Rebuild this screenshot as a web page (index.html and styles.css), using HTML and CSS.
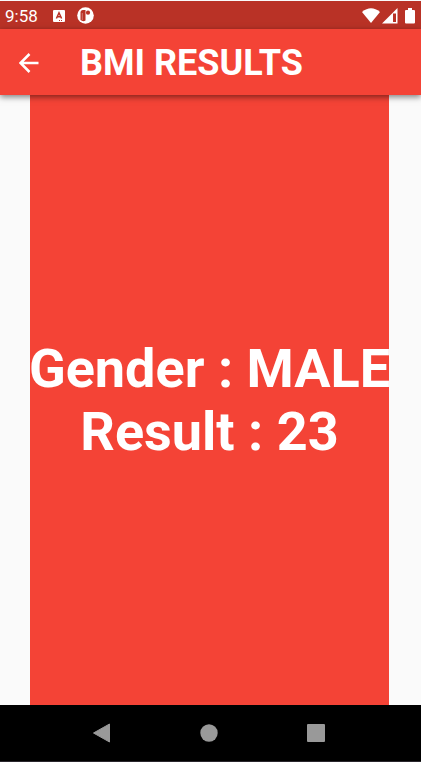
FILE: index.html
```html
<!DOCTYPE html>
<html lang="en">
<head>
<meta charset="utf-8">
<meta name="viewport" content="width=device-width, initial-scale=1">
<title>BMI Results</title>
<link rel="stylesheet" href="styles.css">
</head>
<body>
<div class="status-bar">
  <time class="clock">9:58</time>
  <div class="notices">
    <svg width="12" height="12" viewBox="0 0 12 12" aria-hidden="true">
      <rect width="12" height="12" rx="1" fill="#fff"/>
      <path d="M3.400 8.500 6 2.800l2.600 5.700M4.300 6.800h3.400" fill="none" stroke="#b93226" stroke-width="1.500"/>
      <path d="M6 10.500h1M8 10.500h1" stroke="#b93226"/>
    </svg>
    <svg width="17" height="17" viewBox="0 0 17 17" aria-hidden="true">
      <circle cx="8.500" cy="8.500" r="8.300" fill="#fff"/>
      <path d="M3.500 13V5.500q0-2.500 2.500-2.500h2.500v10.500q-2.500 1.500-5-.5Z" fill="#b93226"/>
      <path d="M5.300 6v7" stroke="#fff" stroke-opacity=".35"/>
      <circle cx="11" cy="5.700" r="2.100" fill="#b93226"/>
    </svg>
  </div>
  <div class="signals">
    <svg width="18" height="16" viewBox="0 0 18 16" aria-hidden="true"><path d="M0 4Q9-3.500 18 4L9 15Z" fill="#fff"/></svg>
    <svg width="16" height="16" viewBox="0 0 16 16" aria-hidden="true"><path d="M0 15.500 15.500 0v15.500Z" fill="#fff"/><path d="M11 5.500h3v8.500h-3Z" fill="#b93226"/></svg>
    <svg class="battery" width="10" height="16" viewBox="0 0 10 16" aria-hidden="true"><path d="M3 0h4v2h2q1 0 1 1v11.500q0 1-1 1H1q-1 0-1-1V3q0-1 1-1h2Z" fill="#fff"/></svg>
  </div>
</div>
<header class="app-bar">
  <button class="back" type="button" aria-label="Back">
    <svg width="20" height="20" viewBox="0 0 20 20" aria-hidden="true"><path d="M19.500 10H2M10.500 1 1.500 10l9 9" fill="none" stroke="#fff" stroke-width="2.500"/></svg>
  </button>
  <h1 class="title">BMI RESULTS</h1>
</header>
<main class="content">
  <section class="result">
    <p>Gender : MALE</p>
    <p>Result : 23</p>
  </section>
</main>
<nav class="nav-bar">
  <button type="button" aria-label="Back"><svg width="20" height="20" viewBox="0 0 20 20" aria-hidden="true"><path d="M1.500 10 17.500 1v18Z" fill="#999" stroke="#999" stroke-linejoin="round"/></svg></button>
  <button type="button" aria-label="Home"><svg width="20" height="20" viewBox="0 0 20 20" aria-hidden="true"><circle cx="10" cy="10" r="8.700" fill="#999"/></svg></button>
  <button type="button" aria-label="Recent apps"><svg width="20" height="20" viewBox="0 0 20 20" aria-hidden="true"><rect x="1" y="1" width="18" height="18" rx="1" fill="#999"/></svg></button>
</nav>
</body>
</html>
```
FILE: styles.css
```css
* {
  box-sizing: border-box;
}

body {
  margin: 0;
  min-height: 100vh;
  display: flex;
  flex-direction: column;
  background: #fafafa;
  color: #fff;
  font-family: Roboto, sans-serif;
}

button {
  display: flex;
  align-items: center;
  justify-content: center;
  padding: 0;
  border: 0;
  background: none;
}

.status-bar {
  display: flex;
  align-items: center;
  height: 29px;
  padding: 1px 6px 0 5px;
  border-top: 1px solid #fafafa;
  background: #b93226;
}

.clock {
  font-size: 17px;
  line-height: 20px;
}

.notices {
  display: flex;
  align-items: center;
  gap: 12px;
  margin-left: 15px;
}

.signals {
  display: flex;
  align-items: center;
  gap: 2px;
  margin-left: auto;
}

.battery {
  margin-left: 5px;
}

.app-bar {
  position: relative;
  display: flex;
  align-items: center;
  height: 66px;
  padding: 2px 9px 0;
  background: #f44336;
  box-shadow: 0 2px 6px rgba(0, 0, 0, 0.5);
}

.back {
  width: 40px;
  height: 40px;
}

.title {
  margin: 0 0 0 31px;
  font-size: 36px;
  line-height: 44px;
  font-weight: 700;
}

.content {
  flex: 1;
  display: flex;
  padding: 0 32px 0 30px;
}

.result {
  flex: 1;
  min-width: 0;
  display: flex;
  flex-direction: column;
  align-items: center;
  justify-content: center;
  background: #f44336;
  font-size: 54px;
  line-height: 63px;
  font-weight: 700;
  white-space: nowrap;
}

.result p {
  margin: 0;
}

.nav-bar {
  display: flex;
  align-items: center;
  justify-content: center;
  gap: 59px;
  height: 57px;
  padding-right: 3px;
  border-bottom: 1px solid #2a272d;
  background: #000;
}

.nav-bar button {
  width: 48px;
  height: 48px;
}
```
